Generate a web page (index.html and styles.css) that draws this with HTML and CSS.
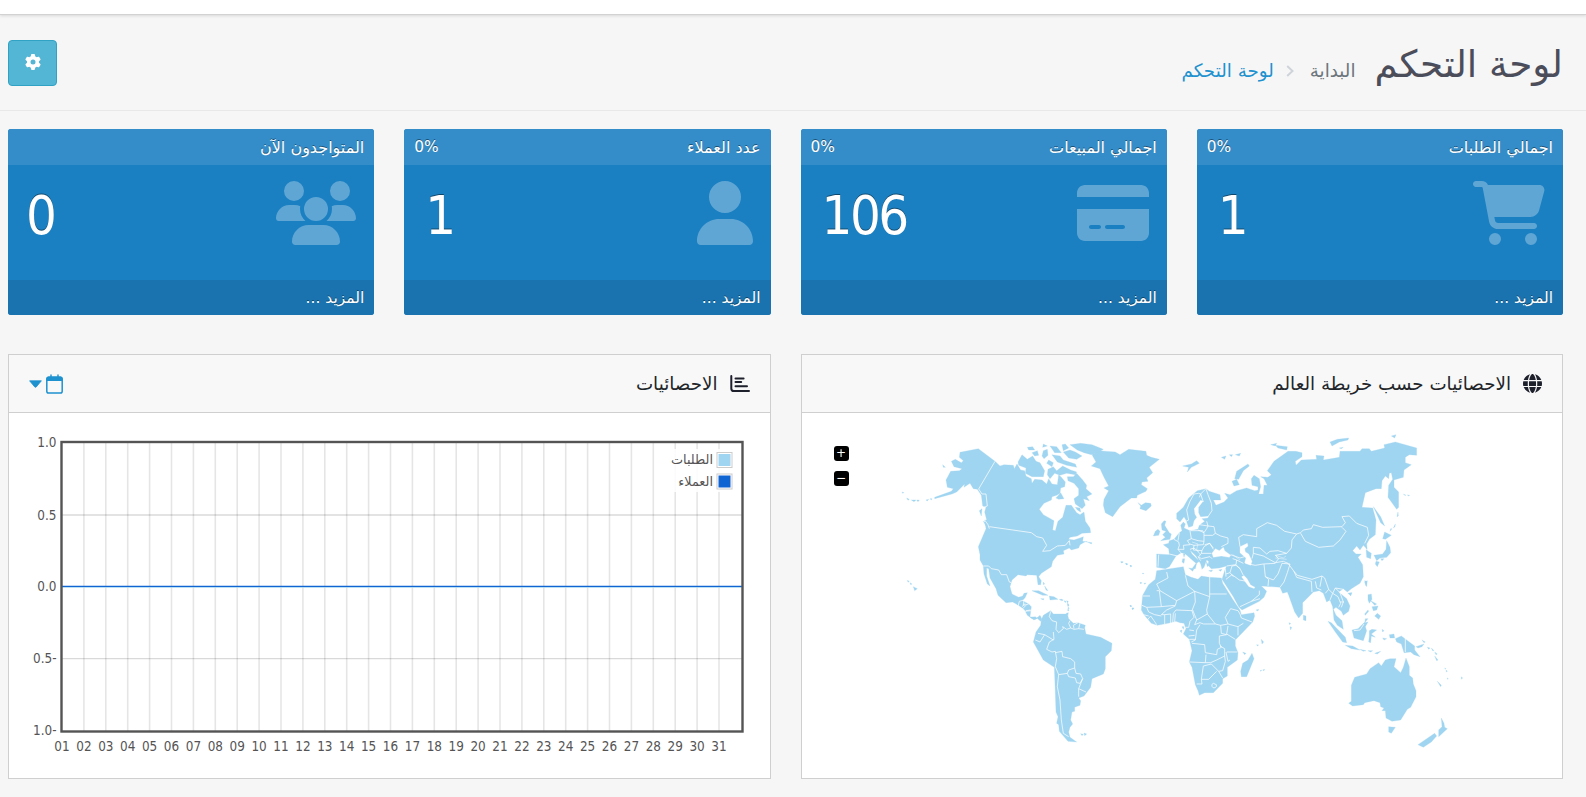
FILE: index.html
```html
<!DOCTYPE html>
<html lang="ar" dir="rtl">
<head>
<meta charset="utf-8">
<title>لوحة التحكم</title>
<link rel="stylesheet" href="styles.css">
</head>
<body>
<div class="topbar"></div>
<header class="page-header">
  <div class="heading">
    <h1>لوحة التحكم</h1>
    <nav class="breadcrumb"><span class="home">البداية</span><svg class="chev" viewBox="0 0 8 12"><path d="M1.2 1 6.5 6 1.2 11"/></svg><a class="current">لوحة التحكم</a></nav>
  </div>
  <button class="gear" aria-label="settings"><svg viewBox="0 0 512 512"><path d="M495.9 166.6c3.2 8.7 .5 18.4-6.4 24.6l-43.3 39.4c1.1 8.3 1.7 16.8 1.7 25.4s-.6 17.1-1.7 25.4l43.3 39.4c6.9 6.2 9.6 15.9 6.4 24.6c-4.4 11.9-9.7 23.3-15.8 34.3l-4.7 8.1c-6.6 11-14 21.4-22.1 31.2c-5.9 7.2-15.7 9.6-24.5 6.8l-55.7-17.7c-13.4 10.3-28.2 18.9-44 25.4l-12.5 57.1c-2 9.1-9 16.3-18.2 17.8c-13.8 2.3-28 3.5-42.5 3.5s-28.7-1.2-42.5-3.5c-9.2-1.5-16.2-8.7-18.2-17.8l-12.5-57.1c-15.8-6.5-30.6-15.1-44-25.4L83.1 425.9c-8.8 2.8-18.6 .3-24.5-6.8c-8.1-9.8-15.5-20.2-22.1-31.2l-4.7-8.1c-6.1-11-11.4-22.4-15.8-34.3c-3.2-8.7-.5-18.4 6.4-24.6l43.3-39.4C64.6 273.1 64 264.6 64 256s.6-17.1 1.7-25.4L22.4 191.2c-6.9-6.2-9.6-15.9-6.4-24.6c4.4-11.9 9.7-23.3 15.8-34.3l4.7-8.1c6.6-11 14-21.4 22.1-31.2c5.9-7.2 15.7-9.6 24.5-6.8l55.7 17.7c13.4-10.3 28.2-18.9 44-25.4l12.5-57.1c2-9.1 9-16.3 18.2-17.8C227.3 1.2 241.5 0 256 0s28.7 1.2 42.5 3.5c9.2 1.5 16.2 8.7 18.2 17.8l12.5 57.1c15.8 6.5 30.6 15.1 44 25.4l55.7-17.7c8.8-2.8 18.6-.3 24.5 6.8c8.1 9.8 15.5 20.2 22.1 31.2l4.7 8.1c6.1 11 11.4 22.4 15.8 34.3zM256 336a80 80 0 1 0 0-160 80 80 0 1 0 0 160z"/></svg></button>
</header>
<main>
  <section class="tiles">
    <article class="tile">
      <div class="tile-head"><span>اجمالي الطلبات</span><span class="pct">0%</span></div>
      <div class="tile-body"><svg width="72" height="64" viewBox="0 0 576 512"><path d="M0 24C0 10.7 10.7 0 24 0H69.5c22 0 41.5 12.8 50.6 32h411c26.3 0 45.5 25 38.6 50.4l-41 152.3c-8.5 31.4-37 53.3-69.5 53.3H170.7l5.4 28.5c2.2 11.3 12.1 19.5 23.6 19.5H488c13.3 0 24 10.7 24 24s-10.7 24-24 24H199.7c-34.6 0-64.3-24.6-70.7-58.5L77.4 54.5c-.7-3.8-4-6.5-7.9-6.5H24C10.7 48 0 37.3 0 24zM128 464a48 48 0 1 1 96 0 48 48 0 1 1-96 0zm336-48a48 48 0 1 1 0 96 48 48 0 1 1 0-96z"/></svg><strong>1</strong></div>
      <div class="tile-foot"><span>المزيد ...</span></div>
    </article>
    <article class="tile">
      <div class="tile-head"><span>اجمالي المبيعات</span><span class="pct">0%</span></div>
      <div class="tile-body"><svg width="72" height="64" viewBox="0 0 576 512"><path d="M64 32C28.7 32 0 60.7 0 96v32H576V96c0-35.3-28.7-64-64-64H64zM576 224H0V416c0 35.3 28.7 64 64 64H512c35.3 0 64-28.7 64-64V224zM112 352h64c8.8 0 16 7.2 16 16s-7.2 16-16 16H112c-8.8 0-16-7.2-16-16s7.2-16 16-16zm112 16c0-8.8 7.2-16 16-16H368c8.8 0 16 7.2 16 16s-7.2 16-16 16H240c-8.8 0-16-7.2-16-16z"/></svg><strong>106</strong></div>
      <div class="tile-foot"><span>المزيد ...</span></div>
    </article>
    <article class="tile">
      <div class="tile-head"><span>عدد العملاء</span><span class="pct">0%</span></div>
      <div class="tile-body"><svg width="56" height="64" viewBox="0 0 448 512"><path d="M224 256A128 128 0 1 0 224 0a128 128 0 1 0 0 256zm-45.7 48C79.8 304 0 383.8 0 482.3C0 498.7 13.3 512 29.7 512H418.3c16.4 0 29.7-13.3 29.7-29.7C448 383.8 368.2 304 269.7 304H178.3z"/></svg><strong>1</strong></div>
      <div class="tile-foot"><span>المزيد ...</span></div>
    </article>
    <article class="tile">
      <div class="tile-head"><span>المتواجدون الآن</span></div>
      <div class="tile-body"><svg width="80" height="64" viewBox="0 0 640 512"><path d="M144 0a80 80 0 1 1 0 160A80 80 0 1 1 144 0zM512 0a80 80 0 1 1 0 160A80 80 0 1 1 512 0zM0 298.7C0 239.8 47.8 192 106.7 192h42.7c15.9 0 31 3.5 44.6 9.7c-1.3 7.2-1.9 14.7-1.9 22.3c0 38.2 16.8 72.5 43.3 96c-.2 0-.4 0-.7 0H21.3C9.6 320 0 310.4 0 298.7zM405.3 320c-.2 0-.4 0-.7 0c26.6-23.5 43.3-57.8 43.3-96c0-7.6-.7-15-1.9-22.3c13.6-6.3 28.7-9.7 44.6-9.7h42.7C592.2 192 640 239.8 640 298.7c0 11.8-9.6 21.3-21.3 21.3H405.3zM224 224a96 96 0 1 1 192 0 96 96 0 1 1-192 0zM128 485.3C128 411.7 187.7 352 261.3 352H378.7C452.3 352 512 411.7 512 485.3c0 14.7-11.9 26.7-26.7 26.7H154.7c-14.7 0-26.7-11.9-26.7-26.7z"/></svg><strong class="zero">0</strong></div>
      <div class="tile-foot"><span>المزيد ...</span></div>
    </article>
  </section>
  <section class="panels">
    <article class="panel">
      <div class="panel-head">
        <svg class="picon" width="19" height="19" viewBox="0 0 512 512"><path d="M352 256c0 22.2-1.2 43.6-3.3 64H163.3c-2.2-20.4-3.3-41.8-3.3-64s1.2-43.6 3.3-64H348.7c2.2 20.4 3.3 41.8 3.3 64zm28.8-64H503.9c5.3 20.5 8.1 41.9 8.1 64s-2.8 43.5-8.1 64H380.8c2.1-20.6 3.2-42 3.2-64s-1.1-43.4-3.2-64zm112.6-32H376.7c-10-63.9-29.8-117.4-55.3-151.6c78.3 20.7 142 77.5 171.9 151.6zm-149.1 0H167.7c6.1-36.4 15.5-68.6 27-94.7c10.5-23.6 22.2-40.7 33.5-51.5C239.4 3.2 248.7 0 256 0s16.6 3.2 27.8 13.8c11.3 10.8 23 27.9 33.5 51.5c11.6 26 20.9 58.2 27 94.7zm-209 0H18.6C48.6 85.9 112.2 29.1 190.6 8.4C165.1 42.6 145.3 96.1 135.3 160zM8.1 192H131.2c-2.1 20.6-3.2 42-3.2 64s1.1 43.4 3.2 64H8.1C2.8 299.5 0 278.1 0 256s2.8-43.5 8.1-64zM194.7 446.6c-11.6-26-20.9-58.2-27-94.6H344.3c-6.1 36.4-15.5 68.6-27 94.6c-10.5 23.6-22.2 40.7-33.5 51.5C272.6 508.8 263.3 512 256 512s-16.6-3.2-27.8-13.8c-11.3-10.8-23-27.9-33.5-51.5zM135.3 352c10 63.9 29.8 117.4 55.3 151.6C112.2 482.9 48.6 426.1 18.6 352H135.3zm358.1 0c-30 74.1-93.6 130.9-171.9 151.6c25.5-34.2 45.2-87.7 55.3-151.6H493.4z"/></svg>
        <h2>الاحصائيات حسب خريطة العالم</h2>
      </div>
      <div class="panel-body">
        <svg class="map" width="760" height="365" viewBox="802 413 760 365">
          <!-- North America and Greenland -->
          <g class="land" transform="translate(890 420) scale(.33333)">
            <path d="M210 97 265 86 315 124 330 138 342 134 370 136 373 146 381 132 392 150 404 152 408 168 424 176 426 190 434 178 456 180 470 192 476 176 486 192 502 194 506 164 514 172 526 186 524 200 512 204 510 220 500 226 486 230 484 240 462 250 448 268 460 284 492 302 488 330 496 332 504 304 518 292 528 256 544 256 560 278 570 284 582 276 586 304 600 324 602 338 576 340 562 348 540 352 536 358 552 360 570 354 580 350 578 364 606 368 604 372 588 364 570 374 566 384 544 390 538 384 520 392 522 402 502 406 488 424 484 440 454 460 446 470 454 482 452 494 444 494 440 466 412 464 408 468 384 464 366 480 360 500 366 522 386 532 398 528 402 520 412 518 406 532 398 542 416 552 424 560 420 590 440 594 450 588 456 596 442 594 432 600 412 586 404 570 392 560 368 546 348 548 324 526 318 506 300 474 296 446 290 444 290 468 300 498 292 492 282 462 280 438 270 420 270 404 265 380 288 326 284 300 290 300 284 276 288 262 278 258 274 226 262 208 250 206 240 190 222 202 224 192 200 216 186 222 134 236 134 232 184 214 190 206 172 202 168 180 182 154 208 152 216 146 192 140 184 124 196 118 214 128 220 122 208 112Z"/>
            <path d="M606 104 626 92 676 96 690 104 716 88 768 94 770 106 784 112 808 118 778 142 788 158 770 174 774 184 756 186 754 194 772 206 768 214 742 226 740 234 724 234 690 260 668 290 646 278 640 256 642 238 656 212 642 204 656 198 642 172 630 146 604 138 618 126Z"/>
            <path d="M744 248 754 256 766 248 782 250 784 258 768 272 750 266 752 258Z"/>
            <path d="M396 104 384 126 386 136 408 144 406 160 426 170 460 170 464 152 450 128 438 124 428 108 412 118ZM412 82 428 80 434 90 416 90ZM426 98 442 92 446 106 434 108ZM460 72 472 78 458 82ZM460 92 472 88 474 106 462 116 456 108ZM480 78 500 80 514 98 494 98ZM516 74 526 72 536 84 520 92ZM520 96 540 90 556 96 576 108 560 118 536 114ZM540 74 572 70 606 74 640 88 628 96 604 104 582 98 562 90ZM486 104 510 108 520 120 556 132 560 142 530 136 502 126ZM476 120 490 128 486 140 470 130ZM474 148 490 140 500 152 518 138 542 150 560 156 556 164 530 160 510 166 494 160 480 176 472 164ZM532 170 550 170 560 160 578 180 590 196 588 206 606 222 590 230 598 242 580 236 586 256 576 266 556 252 552 236 566 226 566 206 552 190 534 182ZM498 234 512 218 522 236 506 238ZM556 262 570 264 572 276 562 270Z"/>
            <path d="M158 134 166 142 160 142ZM36 216 42 218 38 220ZM50 234 58 238 54 241ZM64 240 78 240 72 245ZM80 240 88 240 84 245ZM108 240 116 238 112 243ZM120 236 126 236 124 240ZM268 272 276 266 274 288ZM280 304 294 312 300 324 288 318ZM52 481 58 484 54 487ZM60 488 66 492 62 494ZM70 500 82 506 74 512ZM426 512 446 512 474 526 458 526ZM478 528 492 530 504 538 480 540ZM508 538 516 538 514 542ZM452 536 462 536 460 540ZM460 486 464 492 460 494ZM464 498 474 512 468 510ZM522 542 528 544 526 548ZM532 550 536 552 534 558ZM534 562 538 564 535 568ZM694 424 700 426 696 428ZM708 430 714 432 710 435ZM720 436 725 438 722 440ZM756 460 762 460 760 462ZM750 487 756 488 752 492ZM762 490 768 489 764 493ZM720 556 724 558 722 561ZM726 564 731 564 728 568Z"/>
            <path class="brd" d="M315 124 266 207 276 222 288 222 292 258 282 262M284 300 294 314 298 326M298 320 424 338 440 350 458 354 470 376 458 394 480 392 502 378 526 376 538 362 540 376M280 438 296 438 304 446 326 450 334 464 350 464 358 486 364 488M384 560 388 544 402 540 400 556 416 552M396 568 408 556M404 574 424 572"/>
          </g>
          <!-- South America and Africa -->
          <g class="land" transform="translate(1000 560) scale(.33333)">
            <path d="M92 174 108 178 120 166 124 178 122 196 108 216 100 246 130 300 163 322 166 400 168 456 174 470 170 490 176 494 178 514 204 544 230 546 210 532 206 516 210 502 218 492 212 480 216 456 224 454 224 442 240 436 242 422 236 414 252 408 272 382 276 356 310 342 316 326 316 290 334 272 336 250 302 232 258 222 254 204 256 196 234 188 220 190 206 176 202 162 160 162 152 152 130 166 122 184 106 170 92 172Z"/>
            <path d="M242 521 250 523 246 527ZM252 519 260 522 254 527ZM184 118 190 120 186 122ZM200 122 205 124 202 130ZM203 132 207 136 204 140ZM204 146 207 152 203 152ZM198 160 205 158 204 166Z"/>
            <path d="M470 32 550 20 556 44 574 52 594 58 604 48 628 52 664 54 668 70 698 118 720 150 724 164 762 158 764 168 758 186 706 240 706 258 714 278 712 300 682 322 682 348 668 356 668 370 640 398 614 398 598 406 594 392 586 374 576 322 568 306 576 272 568 238 550 222 558 206 552 190 540 188 528 184 504 190 472 196 454 190 432 164 424 150 428 106 446 74 466 58Z"/>
            <path d="M756 280 762 296 740 350 724 350 722 334 728 310 744 300ZM390 136 396 138 392 140ZM396 144 402 144 398 150ZM546 200 552 200 550 208ZM540 212 546 210 544 218ZM728 276 738 280 734 284ZM780 332 785 330 783 334ZM788 330 794 328 792 332ZM784 238 791 246 786 252ZM770 254 776 255 772 258ZM768 150 776 148 774 153ZM362 5 368 7 364 9ZM376 10 382 12 379 15ZM390 16 396 18 392 20Z"/>
            <path class="brd" d="M152 154 148 170 156 182 170 186 168 208 176 218 190 206 188 200 200 208 212 204 206 190 210 182M234 188 220 196 222 206M240 190 236 206 252 208M212 204 222 208 236 206M160 216 162 238 148 246 140 268 156 276 166 274M114 220 134 224 160 240M134 224 120 246 106 240M166 274 170 296 166 320 176 344 202 340 206 330 224 324 224 306 212 296 188 290 186 274 166 278M202 340 206 350 226 354 230 368 240 370 248 356 242 342 228 340 224 324M248 356 236 386 258 396M236 386 236 410M176 344 172 380 180 420 184 480 190 520 206 530M66 140 76 130M78 152 92 150"/>
            <path class="brd" d="M500 36 504 54 470 72 480 92 530 122 584 94 564 78 556 46M530 122 526 136 484 140 478 92 470 92M450 108 428 108M484 140 440 142 426 136M440 142 446 156 464 164 484 168M430 164 446 168M442 180 452 168 462 182 470 194M494 192 494 164 484 164 500 150 526 138M512 190 512 162 494 164M518 188 520 160 528 150 576 152 586 126 584 94M524 186 526 160M629 50 629 110 584 94M629 102 680 102M629 110 620 150 622 162 590 180 578 150M576 152 582 172 570 184 566 202 556 202M590 180 584 194 600 188 610 192 646 192M622 162 646 192 662 196 684 192 676 172 692 146 714 152 720 162 724 174 756 186M684 192 714 200 730 190M714 200 714 226M684 198 680 222 706 238M662 196 664 220 680 224 658 228 658 250 664 262 652 268 650 284 638 282 616 278 614 254 576 250M574 246 586 240 590 210 600 194M568 238 586 238M568 306 616 308 618 284M616 308 632 308 650 300 674 288 674 266 660 258M680 276 712 276M678 276 684 304 690 300M674 288 676 304 668 332 656 334 634 312 610 318 604 358 606 372 590 372M604 358 626 358 650 334M656 334 668 354M640 370a7 7 0 1 0 9 4zM568 210 582 212M566 228 584 226"/>
          </g>
          <!-- Europe and Asia -->
          <g class="land" transform="translate(1130 420) scale(.33333)">
            <path d="M80 402 118 404 116 386 100 374 116 370 118 362 132 358 148 338 156 332 152 316 160 306 166 312 162 324 180 332 204 328 208 316 224 304 216 296 234 294 236 288 212 290 206 278 206 262 220 244 212 240 192 266 194 282 200 292 192 302 188 318 176 322 168 300 162 290 150 306 140 296 140 280 160 262 176 234 202 212 228 206 238 214 270 224 272 240 250 240 258 256 282 246 294 234 284 220 300 224 320 212 350 204 374 212 384 210 384 200 366 196 364 176 372 166 388 176 392 200 386 222 400 222 402 196 412 196 402 176 392 170 414 172 424 164 412 152 432 124 474 94 498 94 516 98 516 110 496 124 498 136 514 120 560 118 558 106 582 108 580 120 628 112 630 94 690 94 696 86 718 86 724 94 764 84 762 74 796 66 860 84 860 106 838 104 826 112 826 128 844 134 822 150 820 172 792 180 792 202 806 216 806 262 800 268 774 232 776 196 788 178 784 158 778 160 776 176 766 168 756 182 754 206 738 206 706 218 696 262 728 264 738 300 736 344 718 358 710 372 712 392 724 400 722 416 710 412 708 384 700 376 690 390 680 378 668 392 678 402 694 402 684 412 698 434 700 470 690 490 664 506 652 516 640 506 626 516 650 536 660 558 656 574 640 586 634 574 618 562 610 568 618 586 636 602 640 628 622 616 612 600 608 560 600 540 590 546 580 520 568 512 550 516 518 548 518 580 506 594 494 576 476 526 472 516 458 520 450 502 396 498 376 502 362 494 352 476 342 466 334 470 356 500 372 506 386 490 410 514 402 532 388 544 336 570 326 560 310 530 276 478 284 452 290 438 268 444 244 446 234 436 236 424 230 420 222 442 216 448 212 432 198 408 180 390 186 402 208 424 200 430 196 446 186 446 198 430 166 402 154 398 138 408 118 440 106 446 80 442Z"/>
            <path class="sea" d="M250 412 246 400 256 386 268 392 280 382 284 392 302 406 298 412 274 408ZM330 380 352 370 354 378 344 386 346 396 356 402 366 424 362 436 344 428 348 414 330 398Z"/>
            <path d="M102 302 108 304 104 316 118 338 124 342 120 358 92 362 106 352 98 344 108 334 96 330 94 312ZM84 328 90 334 86 346 70 348 76 334ZM158 138 184 132 200 122 208 130 192 138 184 142 172 156 176 142ZM274 112 288 108 284 118ZM298 104 308 104 304 110ZM316 104 332 100 328 108ZM320 154 354 132 358 138 340 152 326 178 314 176ZM306 184 320 178 328 194 312 198ZM422 74 440 70 436 78ZM436 76 472 80 470 90 444 84ZM600 66 622 58 656 54 654 60 628 66 606 78ZM628 84 640 82 634 86ZM784 48 798 44 794 54ZM820 222 828 226 824 226ZM832 225 839 226 836 228ZM730 260 752 290 764 318 752 308ZM804 276 805 288 801 290ZM796 312 795 320 790 324ZM782 326 786 326 780 334ZM764 336 784 346 766 358 758 356ZM770 362 780 382 782 398 770 412 750 414 740 422 732 406 758 402 768 388ZM738 424 748 426 742 440 736 432ZM752 416 762 416 756 422ZM704 486 712 482 710 500ZM654 520 664 518 662 526ZM158 416 164 416 162 430 156 426ZM160 402 165 402 162 412ZM176 444 192 446 188 454ZM236 452 248 450 244 455ZM266 450 276 448 272 454ZM228 424 236 436 232 440Z"/>
            <path class="brd" d="M164 306 176 300 170 270 180 244 192 222 206 220 212 222 208 232M212 222 228 206 234 224 244 250 246 272 234 290M212 222 220 246M86 404 84 440M118 402 142 408M132 358 146 366 148 376 144 388 152 398M148 338 144 362M180 332 184 356 172 362 180 374 160 376 162 388 144 388M184 356 204 362 222 364 222 340 218 332 182 332M204 330 222 338 230 326 234 318 252 320 256 340 248 346 222 346M208 314 234 318 230 304M256 340 272 348 294 354 294 370 274 380M222 364 220 374 192 376 180 372M192 376 190 390 216 392 222 380 238 370 250 384M216 392 214 400 244 400M214 400 206 410 214 416 240 410 246 416M204 410 212 422M180 388 192 384 206 396M240 370 250 388M224 374 240 370M302 404 330 414 344 410M308 416 320 420 318 434 290 438M320 420 340 430M318 434 330 446 340 466M330 446 318 436 306 438 300 458 288 462M288 478 306 464 328 480 350 484M286 446 288 470M300 458 310 470M330 560 364 544 390 536M364 544 388 524 388 512M330 380 326 352 340 344 380 350 380 326 412 308 440 316 464 334 500 342 512 338 520 330 544 326 550 314 578 322 636 320 646 308 636 290 658 288 680 310 712 322 716 346 704 370M500 342 486 360 484 384 470 400M512 340 526 364 566 382 610 378 630 360 648 334 636 322M370 382 370 400 400 408 436 428 446 416 436 406 470 400 444 392 420 394 410 402 390 384 370 382M370 400 366 416M346 430 376 436 400 432 436 430M402 432 406 470 416 478 414 498M406 470 430 480 444 462 456 430 480 432 472 458 462 486 450 502M436 428 460 424 474 430 492 454 502 466 546 478 576 468 584 474 596 508 586 520M492 454 500 472 544 484 546 516M556 484 560 504 574 510M576 468 570 500M596 508 608 520 600 540M608 520 616 504 640 508M608 520 624 530 632 550 626 562M616 504 630 518 640 546 634 562M704 388 718 388M630 546 642 546"/>
            <path class="thin" d="M436 406 460 414 468 408M436 414 470 418M308 404 330 420M186 366 204 372 200 388 212 406"/>
          </g>
          <!-- South-east Asia and Oceania -->
          <g class="land" transform="translate(1220 560) scale(.33333)">
            <path d="M324 184 334 188 376 232 380 248 368 246 346 216ZM376 256 398 258 420 270 394 266ZM396 210 414 206 432 188 444 186 436 200 440 212 430 242 402 234ZM436 176 444 176 434 188ZM448 212 456 208 470 210 454 222 466 232 454 228 452 248 446 246 448 228ZM486 208 492 212 488 216ZM508 224 522 222 524 234 510 234ZM488 234 500 236 492 240ZM526 236 544 228 584 258 584 270 600 290 582 284 572 276 552 278 544 252 530 246ZM588 260 612 252 606 260 594 264ZM606 240 616 246 612 248ZM622 262 630 264 626 268ZM634 264 642 272 638 272ZM644 276 652 282 648 284ZM644 288 654 300 650 302ZM420 268 438 272 430 274ZM444 272 458 272 452 276ZM464 280 482 274 472 282ZM444 104 454 102 456 118 448 130 444 120ZM452 122 470 132 464 136ZM456 140 474 138 470 150 460 152ZM464 168 472 160 482 168 476 178ZM434 162 444 150 446 154 436 166ZM386 100 396 98 392 108ZM250 166 258 168 258 182 250 180ZM207 188 212 190 209 194ZM210 200 215 202 212 210ZM434 62 440 64 438 78Z"/>
            <path d="M510 296 528 296 522 320 542 338 550 322 558 294 568 320 568 346 578 354 580 372 588 392 588 410 572 442 562 448 542 480 516 484 498 474 496 452 486 452 492 444 482 440 480 428 462 422 434 428 430 434 398 438 386 430 394 424 394 376 404 352 440 342 450 326 476 308 484 318 496 300ZM506 500 526 502 514 520 506 516ZM664 474 672 490 674 502 682 506 656 530 656 510 666 500ZM644 520 650 528 634 546 610 562 594 554ZM652 364 664 376 662 380ZM674 324 678 326 676 328ZM678 330 682 334 679 336ZM682 354 685 356 682 358ZM724 350 728 354 724 358Z"/>
            <path class="brd" d="M556 234 556 276M402 212 420 210 432 192"/>
          </g>
        </svg>
        <span class="zoom in">+</span>
        <span class="zoom out">−</span>
      </div>
    </article>
    <article class="panel">
      <div class="panel-head">
        <svg class="picon" width="20" height="18" viewBox="0 0 20 18"><path d="M1.3 1V13.4Q1.3 16 4 16H19" fill="none" stroke="#1e202c" stroke-width="2" stroke-linecap="round"/><path d="M5.5 3.4H13.6M5.5 7.1H11.2M5.5 11.2H17" stroke="#1e202c" stroke-width="2" stroke-linecap="round"/></svg>
        <h2>الاحصائيات</h2>
        <div class="range"><svg width="17" height="20" viewBox="0 0 17 20"><path d="M5 1V4M12 1V4" stroke="#1e91cf" stroke-width="1.4" stroke-linecap="round"/><rect x=".8" y="3.2" width="15.4" height="15.8" rx="1.8" fill="none" stroke="#1e91cf" stroke-width="1.5"/><path d="M.5 7V4.5Q.5 2.5 2.5 2.5H14.5Q16.5 2.5 16.5 4.5V7Z" fill="#1e91cf"/></svg><svg width="13" height="8" viewBox="0 0 13 8"><path d="M.6.8H12.4L7.2 7Q6.5 7.6 5.8 7Z" fill="#1e91cf" stroke="#1e91cf" stroke-width=".8" stroke-linejoin="round"/></svg></div>
      </div>
      <div class="panel-body">
        <svg class="chart" width="760" height="365" viewBox="9.5 413 760 365"></svg>
      </div>
    </article>
  </section>
</main>
<script src="chart.js"></script>
</body>
</html>
```
FILE: styles.css
```css
* { box-sizing: border-box; }
body {
  margin: 0;
  background: #f6f6f6;
  color: #1e202c;
  font-family: "DejaVu Sans", sans-serif;
  height: 797px;
  overflow: hidden;
}
.topbar { height: 15px; background: #fff; border-bottom: 1px solid #d2d2d2; box-shadow: 0 1px 3px rgba(0,0,0,.12); }
.page-header {
  height: 96px;
  display: flex;
  justify-content: space-between;
  align-items: flex-start;
  padding: 25px 23px 0 8px;
  border-bottom: 1px solid #e8e8e8;
}
.heading { display: flex; align-items: baseline; gap: 19px; margin-top: -1px; }
h1 { margin: 0; font-size: 37.4px; line-height: 50px; font-weight: 400; color: #4c4d5a; white-space: nowrap; }
.breadcrumb { display: flex; align-items: baseline; font-size: 18.3px; color: #6c757d; white-space: nowrap; }
.breadcrumb .current { color: #1e91cf; }
.chev { width: 8px; height: 12px; margin: 0 16px 0 12px; fill: none; stroke: #ced4da; stroke-width: 2; }
.gear {
  width: 49px; height: 46px; padding: 0 0 2px; border: 1px solid #30a2c3; border-radius: 4px;
  background: #54b6d5; display: flex; align-items: center; justify-content: center;
}
.gear svg { width: 16px; height: 16px; fill: #fff; }
main { padding: 18px 23px 0 8px; }
.tiles { display: grid; grid-template-columns: repeat(4, minmax(0, 1fr)); gap: 30px; }
.tile { height: 186px; border-radius: 3px; overflow: hidden; background: #1b80c2; color: #fff; text-shadow: 0 -1px 0 rgba(0,0,0,.45); display: flex; flex-direction: column; }
.tile-head { height: 36px; padding: 0 10px; background: #348dc9; display: flex; justify-content: space-between; align-items: center; font-size: 16px; white-space: nowrap; }
.pct { font-size: 15.4px; }
.tile-body { height: 115px; padding: 16px 18px 0 21px; display: flex; justify-content: space-between; align-items: flex-start; }
.tile-body svg { fill: #60a6d5; }
.tile-body strong { font-family: "DejaVu Sans Condensed", "DejaVu Sans", sans-serif; font-stretch: condensed; font-weight: 400; font-size: 54px; line-height: 66px; letter-spacing: -2.5px; padding-top: 2px; direction: ltr; }
.tile-body .zero { margin-left: -3px; }
.tile-foot { flex: 1; padding: 0 10px; background: #1a73af; display: flex; align-items: center; font-size: 15.5px; }
.panels { display: grid; grid-template-columns: repeat(2, minmax(0, 1fr)); gap: 30px; margin-top: 39px; }
.panel { border: 1px solid #cfcfcf; background: #fff; }
.panel-head { height: 58px; border-bottom: 1px solid #cfcfcf; background: #f8f8f8; display: flex; align-items: center; padding: 0 20px; }
.picon { fill: #1e202c; }
h2 { margin: 0 12px 0 0; font-size: 18.3px; font-weight: 400; color: #212529; white-space: nowrap; }
.range { margin-right: auto; display: flex; align-items: center; gap: 4px; }
.panel-body { position: relative; }
.map, .chart { display: block; direction: ltr; }
.land path { fill: #a0d5f1; stroke: #a0d5f1; stroke-width: .8; stroke-linejoin: round; }
.land .sea { fill: #fff; stroke: #fff; }
.land .brd { fill: none; stroke: #fff; stroke-width: 2.4; stroke-opacity: .9; }
.land .thin { fill: none; stroke: #fff; stroke-width: 1.6; stroke-opacity: .8; }
.zoom { position: absolute; left: 32px; width: 15px; height: 15px; border-radius: 3px; background: #000; color: #fff; font-size: 12px; line-height: 14px; text-align: center; }
.zoom.in { top: 33px; }
.zoom.out { top: 58px; }
.chart text { font-family: "DejaVu Sans Condensed", "DejaVu Sans", sans-serif; font-stretch: condensed; font-size: 13.4px; fill: #545454; }
.chart .legend { font-family: "DejaVu Sans", sans-serif; font-stretch: normal; font-size: 12.8px; }
```
FILE: chart.js
```js
(function () {
  const svg = document.querySelector('.chart');
  const NS = 'http://www.w3.org/2000/svg';
  function add(name, attrs, text) {
    const el = document.createElementNS(NS, name);
    for (const k in attrs) el.setAttribute(k, attrs[k]);
    if (text !== undefined) el.textContent = text;
    svg.appendChild(el);
  }
  const left = 61.5, step = 21.9, top = 442, bottom = 731, right = 742;
  for (let i = 0; i < 31; i++) {
    const x = left + i * step;
    if (i) add('line', { x1: x, x2: x, y1: top, y2: bottom, stroke: '#000', 'stroke-opacity': .1, 'stroke-width': 1.6 });
    add('text', { x: x, y: 751, 'text-anchor': 'middle' }, String(i + 1).padStart(2, '0'));
  }
  [515, 658.6].forEach(y => add('line', { x1: left, x2: right, y1: y, y2: y, stroke: '#000', 'stroke-opacity': .15, 'stroke-width': 1.3 }));
  [['1.0', 446.5], ['0.5', 519.5], ['0.0', 590.8], ['0.5-', 663], ['1.0-', 735]].forEach(t =>
    add('text', { x: 56, y: t[1], 'text-anchor': 'end' }, t[0]));
  add('line', { x1: left, x2: right, y1: 587, y2: 587, stroke: '#a0d5f1', 'stroke-width': 1.6 });
  add('line', { x1: left, x2: right, y1: 586.4, y2: 586.4, stroke: '#1065d2', 'stroke-width': 1.2 });
  add('rect', { x: 61, y: 442, width: 681, height: 289.5, fill: 'none', stroke: '#545454', 'stroke-width': 2.4 });
  add('rect', { x: 671, y: 449, width: 62, height: 43, fill: '#fff', 'fill-opacity': .85 });
  [['الطلبات', 452, '#a0d5f1'], ['العملاء', 473.5, '#1065d2']].forEach(r => {
    add('rect', { x: 716.5, y: r[1] + .5, width: 15, height: 15, fill: '#fff', stroke: '#ccc' });
    add('rect', { x: 718, y: r[1] + 2, width: 12, height: 12, fill: r[2] });
    add('text', { x: 712.5, y: r[1] + 12, 'text-anchor': 'end', class: 'legend' }, r[0]);
  });
})();
```
